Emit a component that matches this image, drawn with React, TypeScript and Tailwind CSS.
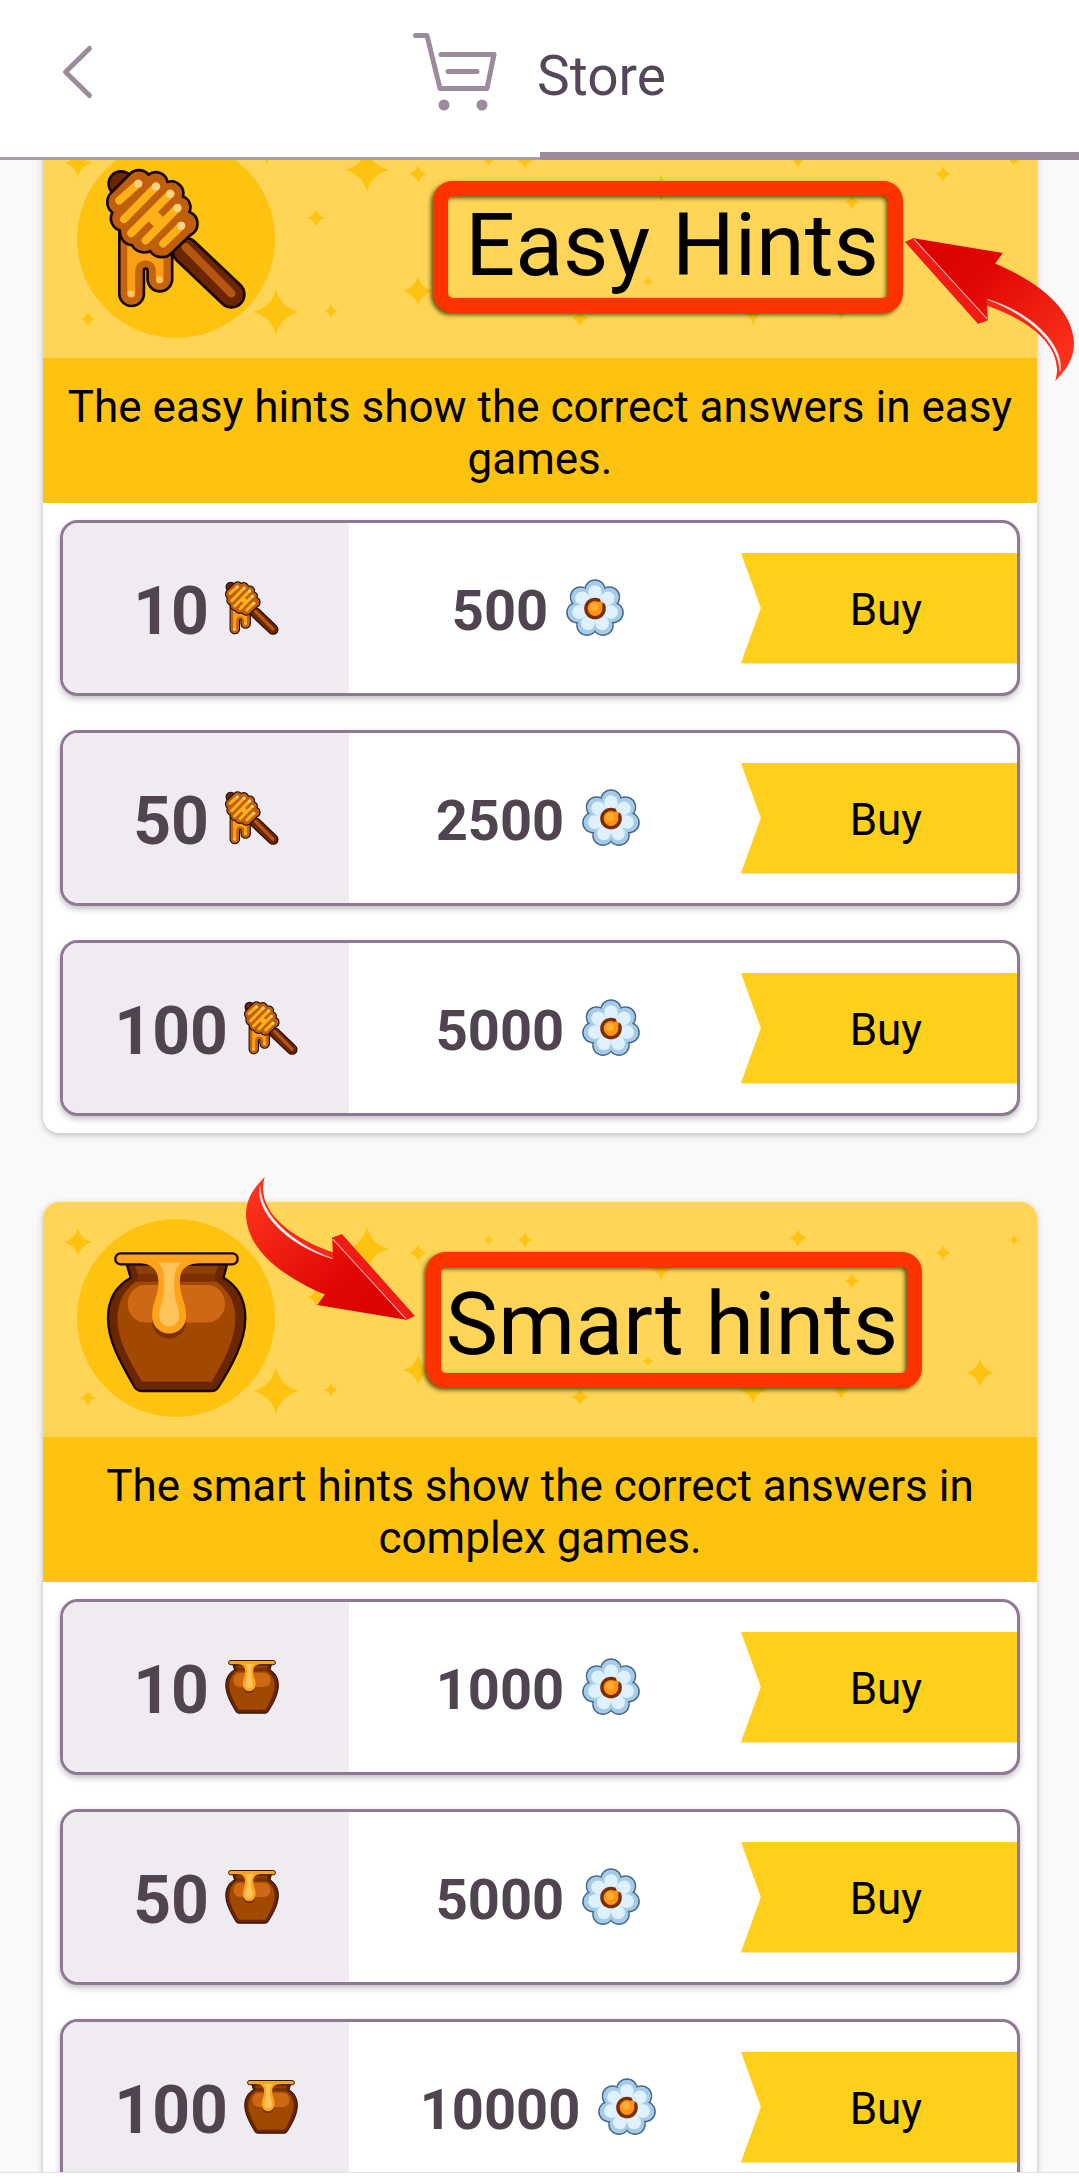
import { clsx } from "clsx";

type IconProps = { className?: string };

const HoneyDipper = ({ className }: IconProps) => (
  <svg viewBox="230 50 424 424" className={className} aria-hidden="true">
    <g strokeLinecap="round" fill="none">
      <path d="M470 300 L607 430" stroke="#160303" strokeWidth="86" />
      <path d="M470 300 L607 430" stroke="#6b2502" strokeWidth="70" />
      <path d="M470 288 L607 427" stroke="#b55710" strokeWidth="25" />
    </g>
    <circle cx="275" cy="97" r="37" fill="#6b2502" stroke="#160303" strokeWidth="8" />
    <path
      d="M270 230 V428 A37 37 0 0 0 344 428 V358 A5 5 0 0 1 355 358 V384 A37 37 0 0 0 429 384 V280 Z"
      fill="#c5640f"
      stroke="#160303"
      strokeWidth="8"
    />
    <path
      d="M294 280 V428 A11 11 0 0 0 318 428 V360 C318 318 380 318 380 360 V386 A11 11 0 0 0 403 386 V310 Z"
      fill="#fd9f15"
    />
    <circle cx="305" cy="428" r="10" fill="#ffc569" />
    <circle cx="391" cy="386" r="10" fill="#ffc569" />
    <path
      d="M245 125 L300 70 A38 38 0 0 1 358 70 A36 36 0 0 1 415 92 A36 36 0 0 1 461 136 A34 34 0 0 1 481 182 A38 38 0 0 1 483 252 L430 303 A42 42 0 0 1 363 300 A42 42 0 0 1 308 282 A40 40 0 0 1 272 238 A38 38 0 0 1 249 184 A40 40 0 0 1 245 125 Z"
      fill="#bf5f0e"
      stroke="#160303"
      strokeWidth="8"
      strokeLinejoin="round"
    />
    <g stroke="#feb019" strokeWidth="24" strokeLinecap="round">
      <path d="M270 148 L327 97" />
      <path d="M284 204 L381 105" />
      <path d="M306 246 L424 127" />
      <path d="M349 268 L445 170" />
      <path d="M402 277 L456 224" />
      <path d="M366 218 L394 190" strokeWidth="32" strokeLinecap="butt" />
    </g>
    <g fill="#ffd285">
      <circle cx="327" cy="97" r="12" />
      <circle cx="380" cy="106" r="12" />
      <circle cx="423" cy="128" r="12" />
      <circle cx="445" cy="170" r="12" />
      <circle cx="456" cy="224" r="12" />
    </g>
  </svg>
);

const HoneyPot = ({ className }: IconProps) => (
  <svg viewBox="226 520 422 422" className={className} aria-hidden="true">
    <path
      d="M286 550 L300 597 C250 625 232 670 232 718 C232 790 275 860 312 925 Q320 936 334 936 H540 Q555 936 562 925 C600 865 643 790 643 718 C643 670 625 625 578 597 L590 550 Z"
      fill="#6a2600"
      stroke="#180501"
      strokeWidth="7"
      strokeLinejoin="round"
    />
    <path
      d="M333 908 H542 C580 845 613 780 613 720 C613 670 592 632 556 608 H316 C280 632 260 670 260 720 C260 780 294 842 333 908 Z"
      fill="#a14900"
    />
    <path d="M312 562 H562 L553 586 H322 Z" fill="#8e3f03" />
    <path d="M322 586 H553 V606 H322 Z" fill="#7a3000" />
    <rect x="291" y="619" width="291" height="112" rx="54" fill="#cf6814" />
    <path d="M364 722 A51 51 0 0 0 466 722 V712 H364 Z" transform="translate(0 6)" fill="#6a2600" opacity="0.7" />
    <rect x="254" y="524" width="366" height="33" rx="16" fill="#ffa31a" stroke="#180501" strokeWidth="7" />
    <path
      d="M315 552 C370 552 383 580 383 610 C383 655 364 670 364 713 A51 51 0 0 0 466 713 C466 670 447 655 447 610 C447 575 460 552 520 552 Z"
      fill="#ffa31a"
    />
    <path
      d="M383 552 C400 570 400 590 400 620 C400 670 385 682 385 713 A30 30 0 0 0 445 713 C445 682 430 670 430 620 C430 590 430 570 452 552 Z"
      fill="#ffc45c"
    />
  </svg>
);

const petals = Array.from({ length: 7 }, (_, i) => {
  const angle = ((i * 360) / 7 - 90) * (Math.PI / 180);
  return { x: Math.cos(angle), y: Math.sin(angle) };
});

const Flower = ({ className }: IconProps) => (
  <svg viewBox="0 0 58 58" className={className} aria-hidden="true">
    {petals.map((p, i) => (
      <circle key={i} cx={29 + p.x * 18.5} cy={29.5 + p.y * 18.5} r="10" fill="#a5cbe9" stroke="#486a85" strokeWidth="1.6" />
    ))}
    {petals.map((p, i) => (
      <circle key={i} cx={29 + p.x * 18} cy={29.5 + p.y * 18} r="9.6" fill="#a5cbe9" />
    ))}
    <circle cx="29" cy="29.5" r="15" fill="#d3e9f9" />
    {petals.map((p, i) => (
      <circle key={i} cx={29 + p.x * 16.5} cy={29.5 + p.y * 16.5} r="6.8" fill="#e0f1fe" />
    ))}
    <circle cx="29" cy="29.5" r="10.8" fill="#7b2d06" />
    <path d="M33 18 L35 23 L40 25 L38 19 Z" fill="#d3e9f9" />
    <circle cx="29" cy="29.5" r="7.4" fill="#fc9312" />
    <circle cx="34" cy="25" r="2.6" fill="#fc9312" />
    <circle cx="28" cy="28" r="4" fill="#ffad33" />
  </svg>
);

const Arrow = ({ className }: IconProps) => (
  <svg viewBox="648 290 506 428" className={clsx("absolute w-[169px] h-[143px] z-10", className)} aria-hidden="true">
    <defs>
      <linearGradient id="arrow-fill" x1="0" y1="0" x2="1" y2="1">
        <stop offset="0" stopColor="#ff3a20" />
        <stop offset="0.65" stopColor="#e00603" />
        <stop offset="1" stopColor="#d90000" />
      </linearGradient>
    </defs>
    <path
      d="M704 290 C664 330 648 362 648 405 C652 490 722 572 884 642 L861 673 L1128 717 L1153 706 L935 461 L906 472 L908 516 C790 476 672 394 704 290 Z"
      fill="url(#arrow-fill)"
    />
    <path d="M906 472 L935 461 L1153 706 L1128 717 Z" fill="#ee1c14" />
    <path d="M908 516 C790 476 672 394 704 290 C670 385 770 495 912 536 Z" fill="#f5281a" />
    <path d="M908 476 L1126 714" stroke="#ffb3ad" strokeWidth="3" />
    <path d="M690 318 C676 390 765 492 906 534 C780 486 692 400 690 318 Z" fill="#fff" stroke="#ffc9c4" strokeWidth="2" />
  </svg>
);

// x, y, radius
const stars = [
  [35, 40, 14], [224, 33, 8], [324, 47, 22], [375, 51, 9], [446, 38, 5], [482, 38, 8],
  [273, 95, 9], [233, 189, 23], [288, 188, 7], [45, 196, 8], [375, 168, 15], [537, 195, 9],
  [618, 65, 14], [755, 36, 9], [809, 79, 8], [900, 51, 8], [971, 38, 5], [605, 159, 5],
  [710, 188, 14], [798, 189, 8], [937, 171, 14],
];

const Stars = () => (
  <svg viewBox="0 0 994 235" preserveAspectRatio="xMinYMin slice" className="absolute inset-0 size-full" aria-hidden="true">
    {stars.map(([x, y, r], i) => (
      <path
        key={i}
        transform={`translate(${x} ${y}) scale(${r})`}
        d="M0 -1 Q0.2 -0.2 1 0 Q0.2 0.2 0 1 Q-0.2 0.2 -1 0 Q-0.2 -0.2 0 -1 Z"
        fill="#fdc310"
      />
    ))}
  </svg>
);

const sections = [
  {
    title: "Easy Hints",
    text: "The easy hints show the correct answers in easy games.",
    Icon: HoneyDipper,
    iconClass: "w-[141px]",
    frameClass: "-left-8 -right-6 -top-3 -bottom-4",
    arrowClass: "left-[862px] top-[115px] rotate-180",
    offers: [
      { amount: 10, price: 500 },
      { amount: 50, price: 2500 },
      { amount: 100, price: 5000 },
    ],
  },
  {
    title: "Smart hints",
    text: "The smart hints show the correct answers in complex games.",
    Icon: HoneyPot,
    iconClass: "w-[141px] mt-2.5",
    frameClass: "-left-5 -right-6 -top-5 -bottom-3",
    arrowClass: "left-[203px] -top-[25px]",
    offers: [
      { amount: 10, price: 1000 },
      { amount: 50, price: 5000 },
      { amount: 100, price: 10000 },
    ],
  },
];

const HintCard = ({ section }: { section: (typeof sections)[number] }) => {
  const { title, text, Icon, iconClass, frameClass, arrowClass, offers } = section;

  return (
    <section className="relative rounded-2xl bg-white shadow-[0_2px_6px_rgba(0,0,0,0.25)]">
      <div className="relative flex h-[235px] items-center overflow-hidden rounded-t-2xl bg-[#ffd557] pl-[34px]">
        <Stars />
        <div className="relative mb-1 flex size-[198px] shrink-0 items-center justify-center rounded-full bg-[#fdc310]">
          <Icon className={iconClass} />
        </div>
        <h2 className="relative ml-8 flex-1 pt-2 text-center text-[88px] leading-[104px]">
          <span className="relative inline-block">
            {title}
            <span
              className={clsx(
                "absolute rounded-[20px] border-[15px] border-[#ff3300] drop-shadow-[-2px_2px_2px_rgba(50,50,0,0.8)]",
                frameClass
              )}
            />
          </span>
        </h2>
      </div>
      <p className="bg-[#fdc310] px-5 pt-[23px] pb-[18px] text-center text-[44px] leading-[52px]">{text}</p>
      <ul className="flex flex-col gap-[34px] p-[17px]">
        {offers.map(({ amount, price }) => (
          <li
            key={amount}
            className="grid h-[176px] grid-cols-[3fr_4fr_3fr] items-center overflow-hidden rounded-[18px] border-3 border-[#8f7893] bg-white font-bold text-[#4f444f] shadow-[0_3px_6px_rgba(0,0,0,0.25)]"
          >
            <div className="flex h-full items-center justify-center gap-4 bg-[#f0ebf1]">
              <span className="pt-2 text-[66px] leading-none">{amount}</span>
              <Icon className="w-[54px]" />
            </div>
            <div className="flex items-center justify-center gap-[18px] pr-1">
              <span className="pt-1.5 text-[56px] leading-none">{price}</span>
              <Flower className="w-[58px]" />
            </div>
            <button
              type="button"
              className="ml-2.5 h-[111px] bg-[#fed01b] pt-1 pl-3.5 text-[44px] leading-none font-normal text-black [clip-path:polygon(0_0,100%_0,100%_100%,0_100%,20px_50%)]"
            >
              Buy
            </button>
          </li>
        ))}
      </ul>
      <Arrow className={arrowClass} />
    </section>
  );
};

const App = () => {
  return (
    <div className="flex h-screen flex-col overflow-hidden bg-[#f9f9f9] font-[Roboto,sans-serif] text-black">
      <header className="shrink-0 bg-white">
        <div className="grid h-[152px] grid-cols-[1fr_auto_1fr] items-center">
          <button type="button" aria-label="Back" className="ml-[60px] mb-2 justify-self-start">
            <svg viewBox="0 0 34 56" className="h-14 w-[34px]" fill="none" stroke="#9c8b9d" strokeWidth="5" strokeLinecap="round" strokeLinejoin="round">
              <path d="M29.500 4.500 L5.500 28 L29.500 51.500" />
            </svg>
          </button>
          <div className="flex items-center gap-10">
            <svg viewBox="413 33 84 78" className="h-[78px] w-[84px] mb-2" fill="none" stroke="#9c8b9d" strokeWidth="5" strokeLinecap="round" strokeLinejoin="round" aria-hidden="true">
              <path d="M415.500 35.500 H427 L440 88.500 H487 L494 54.500 H441" />
              <path d="M448 71.500 H477" />
              <circle cx="444" cy="105" r="5.500" fill="#9c8b9d" stroke="none" />
              <circle cx="482" cy="105" r="5.500" fill="#9c8b9d" stroke="none" />
            </svg>
            <h1 className="text-[55px] leading-none text-[#554659]">Store</h1>
          </div>
        </div>
        <div className="flex h-2">
          <div className="flex-1 border-b-3 border-[#a99ea9]" />
          <div className="flex-1 bg-[#9c8b9d]" />
        </div>
      </header>
      <main className="min-h-0 flex-1 overflow-hidden pr-[42px] pl-[43px]">
        <div className="-mt-[37px] flex flex-col gap-[69px]">
          {sections.map((section) => (
            <HintCard key={section.title} section={section} />
          ))}
        </div>
      </main>
      <footer className="h-[7px] shrink-0 border-t border-[#e4e4e4] bg-white" />
    </div>
  );
};

export default App;
